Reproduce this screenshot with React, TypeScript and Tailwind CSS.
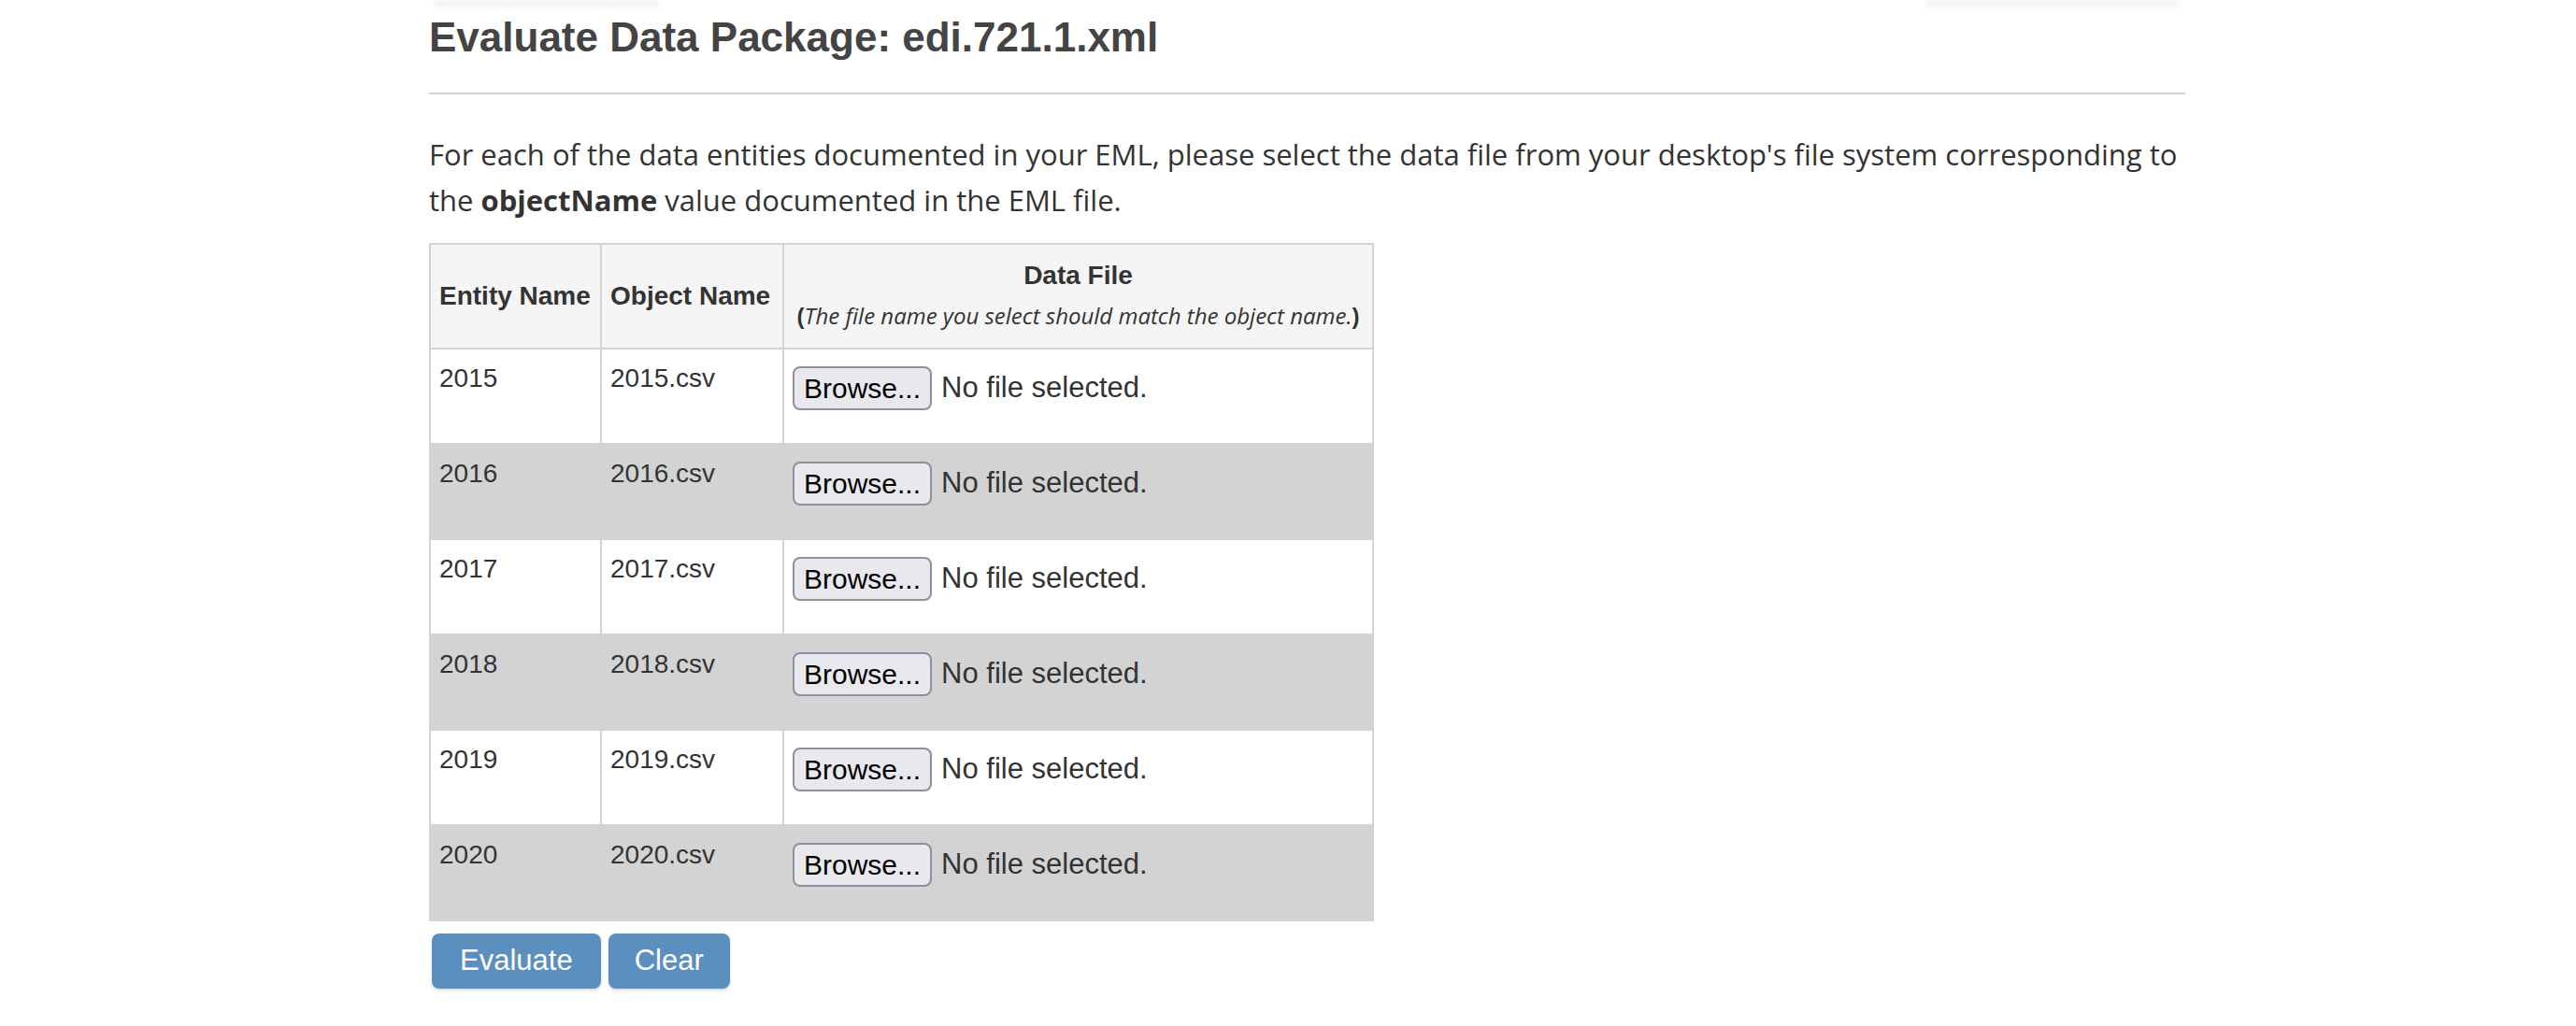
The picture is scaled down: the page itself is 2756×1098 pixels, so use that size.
import React from "react";

const rows = ["2015", "2016", "2017", "2018", "2019", "2020"];

export default function App() {
  return (
    <div className="min-h-[1098px] w-[2756px] bg-white relative" style={{ fontFamily: '"Liberation Sans", Arial, sans-serif' }}>
      {/* faint leftovers of the nav bar at the very top */}
      <div className="absolute top-0 left-[465px] w-[240px] h-[8px] bg-[#f3f3f3] blur-[2px]" />
      <div className="absolute top-0 left-[2060px] w-[270px] h-[8px] bg-[#f3f3f3] blur-[2px]" />

      <div className="ml-[459px] w-[1879px] pt-[20px]">
        <h1 className="text-[44px] leading-[40px] font-bold text-[#444]">Evaluate Data Package: edi.721.1.xml</h1>
        <hr className="mt-[39px] border-0 h-[2px] bg-[#d3d3d3]" />

        <p
          className="mt-[40px] text-[31px] leading-[49px] text-[#333]"
          style={{ fontFamily: '"Open Sans", sans-serif' }}
        >
          For each of the data entities documented in your EML, please select the data file from your desktop's file system corresponding to the <b>objectName</b> value documented in the EML file.
        </p>

        <table className="mt-[21px] w-[1011px] table-fixed border-collapse text-[28px] text-[#333]">
          <colgroup>
            <col className="w-[183px]" />
            <col className="w-[195px]" />
            <col />
          </colgroup>
          <thead>
            <tr className="h-[112px] bg-[#f5f5f5]">
              <th className="border-2 border-[#d3d3d3] px-[9px] text-left font-bold align-middle">Entity Name</th>
              <th className="border-2 border-[#d3d3d3] px-[9px] text-left font-bold align-middle">Object Name</th>
              <th className="border-2 border-[#d3d3d3] px-[6px] pb-[4px] text-center align-middle">
                <div className="font-bold leading-[36px]">Data File</div>
                <div className="mt-[10px] text-[24px] leading-[30px] font-normal whitespace-nowrap">
                  <b>(</b>
                  <i style={{ fontFamily: '"Open Sans", sans-serif' }}>The file name you select should match the object name.</i>
                  <b>)</b>
                </div>
              </th>
            </tr>
          </thead>
          <tbody>
            {rows.map((y, i) => (
              <tr key={y} className={i % 2 === 1 ? "h-[102px] bg-[#d3d3d3]" : "h-[102px] bg-white"}>
                <td className="border-2 border-[#d3d3d3] px-[9px] pt-[11px] align-top leading-[40px]">{y}</td>
                <td className="border-2 border-[#d3d3d3] px-[9px] pt-[11px] align-top leading-[40px]">{y}.csv</td>
                <td className="border-2 border-[#d3d3d3] px-[9px] pt-[18px] align-top">
                  <div className="flex items-center gap-[10px]">
                    <span className="h-[47px] px-[10px] flex items-center rounded-[8px] border-2 border-[#8f8f9d] bg-[#e9e9ed] text-black text-[30px]">
                      Browse...
                    </span>
                    <span className="text-[#333] text-[31px]">No file selected.</span>
                  </div>
                </td>
              </tr>
            ))}
          </tbody>
        </table>

        <div className="mt-[13px] flex gap-[8px] pl-[3px]">
          <button className="h-[59px] px-[30px] rounded-[8px] bg-[#5a8fbf] text-white text-[31px] shadow-[0_2px_3px_rgba(0,0,0,0.15)]">
            Evaluate
          </button>
          <button className="h-[59px] px-[28px] rounded-[8px] bg-[#5a8fbf] text-white text-[31px] shadow-[0_2px_3px_rgba(0,0,0,0.15)]">
            Clear
          </button>
        </div>
      </div>
    </div>
  );
}
